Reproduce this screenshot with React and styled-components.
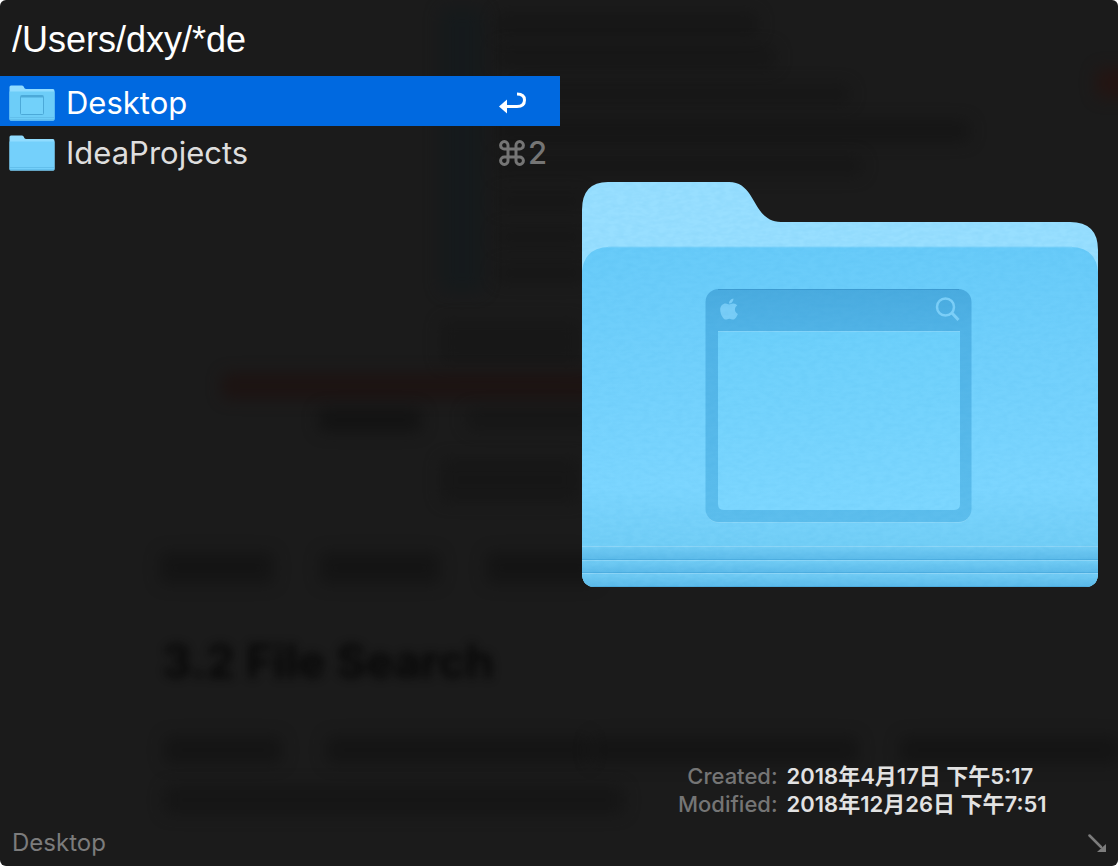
import React, { useState } from "react";
import styled, { createGlobalStyle } from "styled-components";
import { FaApple } from "react-icons/fa";

const GlobalStyle = createGlobalStyle`
  * { box-sizing: border-box; }
  body {
    margin: 0;
    background: #fff;
    font-family: Inter, "Noto Sans CJK SC", sans-serif;
  }
`;

const Window = styled.main`
  position: relative;
  display: flex;
  flex-direction: column;
  min-height: 100vh;
  overflow: hidden;
  border-radius: 6px;
  background: #1b1b1b;
  color: #dedede;
`;

const Backdrop = styled.svg`
  position: absolute;
  inset: 0;
  width: 100%;
  height: 100%;
  pointer-events: none;
`;

const SearchBox = styled.input`
  position: relative;
  width: 100%;
  height: 76px;
  padding: 4px 12px 0;
  border: 0;
  outline: 0;
  background: transparent;
  color: #fff;
  font: 400 36px/44px "Liberation Sans", sans-serif;
`;

const Body = styled.div`
  position: relative;
  flex: 1;
  display: grid;
  grid-template-columns: 560fr 558fr;
`;

const Results = styled.ul`
  margin: 0;
  padding: 0;
  list-style: none;
`;

const ResultRow = styled.button`
  display: flex;
  align-items: center;
  gap: 11px;
  width: 100%;
  height: 50px;
  padding: 3px 12px 0 9px;
  border: 0;
  background: ${(p) => (p.$active ? "#0069e0" : "transparent")};
  color: ${(p) => (p.$active ? "#fff" : "#dedede")};
  font: 400 31px/40px Inter, sans-serif;
  text-align: left;
`;

const ResultName = styled.span`
  flex: 1;
`;

const Shortcut = styled.span`
  display: flex;
  align-items: center;
  gap: 3px;
  width: 49px;
  color: #757575;
  font-weight: 500;
`;

const Preview = styled.section`
  display: flex;
  flex-direction: column;
  justify-content: space-between;
  padding-top: 96px;
`;

const FolderArt = styled.svg`
  display: block;
  width: ${(p) => (p.$small ? "46px" : "100%")};
  height: auto;
`;

const Details = styled.dl`
  display: grid;
  grid-template-columns: 218fr 332fr;
  column-gap: 9px;
  margin: 0;
  font-size: 22px;
  line-height: 28px;
  font-weight: 500;
`;

const DetailLabel = styled.dt`
  text-align: right;
  color: #757575;
`;

const DetailValue = styled.dd`
  margin: 0;
  color: #e2e2e2;
  font-weight: 600;
`;

const Footer = styled.footer`
  position: relative;
  display: flex;
  align-items: center;
  justify-content: space-between;
  height: 48px;
  padding: 2px 12px 0;
  color: #7c7c7c;
  font-size: 24px;
  line-height: 32px;
`;

const ghostLines = [
  [496, 12, 262, 24, "#121212", 0.5],
  [496, 46, 280, 22, "#121212", 0.5],
  [520, 84, 330, 20, "#121212", 0.5],
  [496, 120, 474, 22, "#101010", 0.5],
  [496, 156, 366, 20, "#121212", 0.5],
  [496, 192, 90, 18, "#121212", 0.5],
  [496, 228, 90, 18, "#121212", 0.5],
  [496, 264, 90, 18, "#121212", 0.5],
  [440, 8, 44, 284, "#10191d", 0.5],
  [440, 320, 140, 44, "#141414", 0.5],
  [222, 373, 400, 26, "#1e0e0c", 0.6],
  [318, 408, 104, 24, "#0e0e0e", 0.6],
  [466, 408, 130, 22, "#121212", 0.5],
  [440, 458, 140, 44, "#141414", 0.6],
  [160, 552, 114, 32, "#0e0e0e", 0.5],
  [320, 552, 120, 32, "#0e0e0e", 0.5],
  [486, 552, 110, 32, "#0e0e0e", 0.5],
  [164, 736, 118, 28, "#0e0e0e", 0.5],
  [326, 736, 264, 28, "#0e0e0e", 0.5],
  [590, 736, 268, 28, "#0e0e0e", 0.5],
  [900, 736, 218, 28, "#0e0e0e", 0.5],
  [164, 786, 460, 28, "#101010", 0.5],
  [1096, 68, 40, 30, "#2a110d", 0.6],
];

function DesktopBackdrop() {
  return (
    <Backdrop aria-hidden="true">
      <defs>
        <filter id="haze" x="-60%" y="-100%" width="220%" height="300%" colorInterpolationFilters="sRGB">
          <feGaussianBlur stdDeviation="8" />
        </filter>
        <filter id="softText" x="-10%" y="-50%" width="120%" height="200%" colorInterpolationFilters="sRGB">
          <feGaussianBlur stdDeviation="5" />
        </filter>
      </defs>
      {ghostLines.map(([x, y, w, h, fill, opacity], i) => (
        <rect key={i} x={x} y={y} width={w} height={h} rx="6" fill={fill} opacity={opacity} filter="url(#haze)" />
      ))}
      <text x="162" y="678" fontSize="46" fontWeight="700" fill="#060606" opacity="0.9" filter="url(#softText)">
        3.2 File Search
      </text>
    </Backdrop>
  );
}

function LargeFolder() {
  return (
    <FolderArt viewBox="560 172 558 426" role="img" aria-label="Desktop folder">
      <defs>
        <linearGradient id="front" x1="0" y1="0" x2="0" y2="1">
          <stop offset="0" stopColor="#68cbf9" />
          <stop offset="0.7" stopColor="#7cd6ff" />
          <stop offset="0.88" stopColor="#72cef6" />
          <stop offset="1" stopColor="#6ecaf4" />
        </linearGradient>
        <linearGradient id="frame" x1="0" y1="0" x2="0" y2="1">
          <stop offset="0" stopColor="#4aabdf" />
          <stop offset="0.17" stopColor="#51b3e6" />
          <stop offset="1" stopColor="#5dbeed" />
        </linearGradient>
        <linearGradient id="screen" x1="0" y1="0" x2="0" y2="1">
          <stop offset="0" stopColor="#6dd0fb" />
          <stop offset="1" stopColor="#7dd7ff" />
        </linearGradient>
        <linearGradient id="fold" x1="0" y1="0" x2="0" y2="1">
          <stop offset="0" stopColor="#74cef6" />
          <stop offset="1" stopColor="#5cbae9" />
        </linearGradient>
        <clipPath id="outline">
          <path d="M582 210Q582 182 608 182H729C757 182 752 222 781 222H1070Q1098 222 1098 250V573Q1098 587 1084 587H596Q582 587 582 573Z" />
        </clipPath>
        <filter id="paper" x="0" y="0" width="100%" height="100%" colorInterpolationFilters="sRGB">
          <feTurbulence type="fractalNoise" baseFrequency="0.12 0.25" numOctaves="2" />
          <feColorMatrix values="0 0 0 0 0.1  0 0 0 0 0.55  0 0 0 0 0.8  0.6 0 0 0 -0.2" />
        </filter>
      </defs>
      <g clipPath="url(#outline)">
        <rect x="582" y="182" width="516" height="405" fill="#98dfff" />
        <path d="M582 272Q584 247 610 247H1070Q1096 247 1098 272V590H582Z" fill="url(#front)" />
        <path d="M608 247H1072" stroke="#7fd3fa" />
        <rect x="582" y="546" width="516" height="14" fill="url(#fold)" />
        <rect x="582" y="560" width="516" height="13" fill="url(#fold)" />
        <rect x="582" y="573" width="516" height="14" fill="url(#fold)" />
        <path d="M582 546.500H1098M582 560.500H1098M582 573.500H1098" stroke="#8ed6f7" />
        <path d="M582 559.500H1098M582 572.500H1098M582 586.500H1098" stroke="#4eaee0" />
        <rect x="706" y="290" width="265" height="233" rx="13" fill="#8ad7f9" />
        <rect x="705.500" y="289" width="266" height="233" rx="13" fill="url(#frame)" />
        <path d="M718 289.500H959" stroke="#3e9bd0" />
        <path d="M718 331H960V504Q960 510 954 510H724Q718 510 718 504Z" fill="url(#screen)" />
        <path d="M718 331.500H960" stroke="#84d5fa" />
        <FaApple x="717" y="297" size="24" color="#79cdf7" />
        <circle cx="945.500" cy="307" r="8.500" fill="none" stroke="#7ccff8" strokeWidth="2.500" />
        <path d="M952 313L958.500 320" stroke="#7ccff8" strokeWidth="3" />
        <rect x="582" y="182" width="516" height="405" filter="url(#paper)" opacity="0.18" />
      </g>
    </FolderArt>
  );
}

function SmallFolder({ desktop }) {
  return (
    <FolderArt $small viewBox="0 0 46 36" aria-hidden="true">
      <path d="M0.500 2Q0.500 0.500 2 0.500H13C15 0.500 15 4 17 4H44Q45.500 4 45.500 6V34Q45.500 35.500 44 35.500H2Q0.500 35.500 0.500 34Z" fill="#90dcff" />
      <path d="M0.500 6.500H45.500V34Q45.500 35.500 44 35.500H2Q0.500 35.500 0.500 34Z" fill={desktop ? "#6dcdf8" : "#74d0fb"} />
      <path d="M1 32.500H45M1 34.500H45" stroke="#62bfec" />
      {desktop && (
        <>
          <rect x="11.500" y="10.500" width="23" height="19" rx="1" fill="#72d1fa" stroke="#4ca9d8" />
          <path d="M12 11.500H34" stroke="#4ca9d8" strokeWidth="2" />
        </>
      )}
    </FolderArt>
  );
}

function ReturnIcon() {
  return (
    <svg width="28" height="24" viewBox="0 0 28 24" role="img" aria-label="Return">
      <path d="M6 15.500H18Q25.500 15.500 25.500 9Q25.500 3 18 3" fill="none" stroke="#fff" strokeWidth="3" />
      <path d="M0 15.500L8 8.500V22.500Z" fill="#fff" />
    </svg>
  );
}

function CommandIcon() {
  return (
    <svg width="26" height="26" viewBox="0 0 26 26" role="img" aria-label="Command" fill="none" stroke="currentColor" strokeWidth="3">
      <path d="M9 9H17V17H9ZM9 9H5.500A3.700 3.700 0 1 1 9 5.500ZM17 9V5.500A3.700 3.700 0 1 1 20.500 9ZM17 17H20.500A3.700 3.700 0 1 1 17 20.500ZM9 17V20.500A3.700 3.700 0 1 1 5.500 17Z" />
    </svg>
  );
}

function OpenArrow() {
  return (
    <svg width="18" height="18" viewBox="0 0 18 18" aria-hidden="true">
      <path d="M1.500 1.500L13 13" stroke="currentColor" strokeWidth="2.500" strokeLinecap="round" />
      <path d="M18 10V18H9Z" fill="currentColor" />
    </svg>
  );
}

export default function App() {
  const [query, setQuery] = useState("/Users/dxy/*de");
  return (
    <>
      <GlobalStyle />
      <Window>
        <DesktopBackdrop />
        <SearchBox aria-label="Search files" value={query} onChange={(e) => setQuery(e.target.value)} spellCheck={false} />
        <Body>
          <Results>
            <li>
              <ResultRow type="button" $active>
                <SmallFolder desktop />
                <ResultName>Desktop</ResultName>
                <Shortcut><ReturnIcon /></Shortcut>
              </ResultRow>
            </li>
            <li>
              <ResultRow type="button">
                <SmallFolder />
                <ResultName>IdeaProjects</ResultName>
                <Shortcut><CommandIcon />2</Shortcut>
              </ResultRow>
            </li>
          </Results>
          <Preview>
            <LargeFolder />
            <Details>
              <DetailLabel>Created:</DetailLabel>
              <DetailValue>2018年4月17日 下午5:17</DetailValue>
              <DetailLabel>Modified:</DetailLabel>
              <DetailValue>2018年12月26日 下午7:51</DetailValue>
            </Details>
          </Preview>
        </Body>
        <Footer>
          <span>Desktop</span>
          <OpenArrow />
        </Footer>
      </Window>
    </>
  );
}
